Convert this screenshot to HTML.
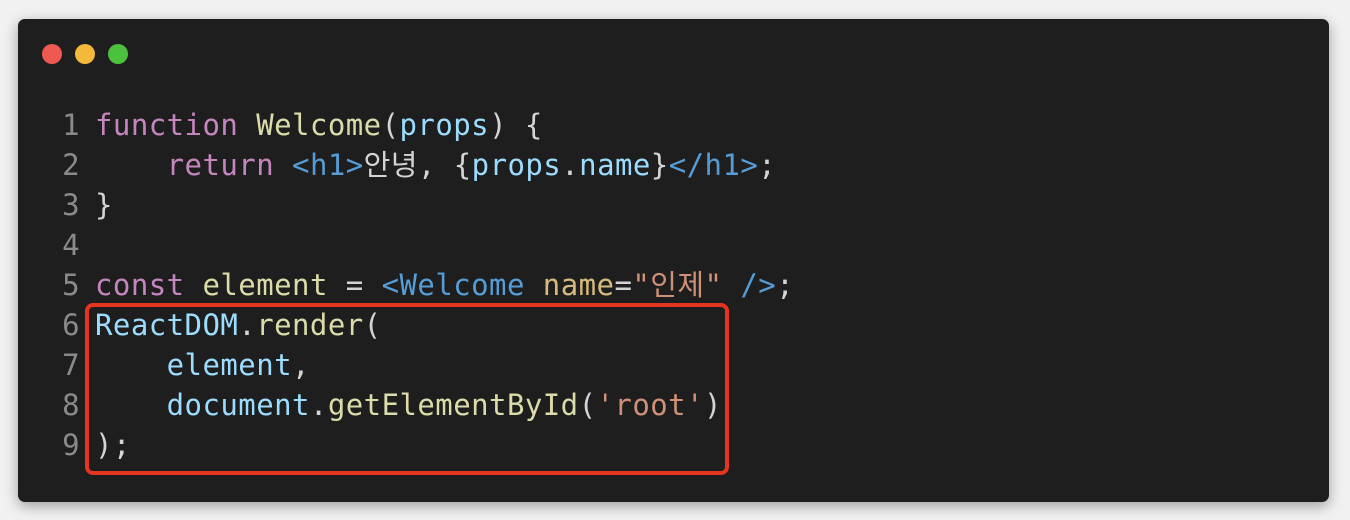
<!DOCTYPE html>
<html><head><meta charset="utf-8"><style>
body{margin:0;width:1350px;height:520px;background:#f1f1f1;position:relative;overflow:hidden}
.win{position:absolute;left:18px;top:19px;width:1311px;height:483px;background:#1e1e1e;border-radius:7px;box-shadow:0 4px 14px rgba(0,0,0,.35)}
.dot{position:absolute;top:44px;width:20px;height:20px;border-radius:50%}
.code{position:absolute;left:0;top:105px;font-family:"DejaVu Sans Mono","Noto Sans CJK KR",monospace;font-size:29px;line-height:40px;letter-spacing:0.45px;color:#d4d4d4;white-space:pre}
.ln{position:absolute;left:38px;width:42px;text-align:right;color:#8a8a8a}
.tx{position:absolute;left:95px}
.k{color:#c586c0}.f{color:#dcdcaa}.t{color:#569cd6}.v{color:#9cdcfe}.a{color:#ce9178}.at{color:#d7ba7d}
.box{position:absolute;left:85px;top:303px;width:636px;height:164px;border:4px solid #e5341f;border-radius:8px}
</style></head><body>
<div class="win"></div>
<div class="dot" style="left:42px;background:#ee5a52"></div>
<div class="dot" style="left:75px;background:#f4b83a"></div>
<div class="dot" style="left:108px;background:#4cc13e"></div>
<div class="code">
<div class="ln" style="top:0">1</div><div class="tx" style="top:0"><span class="k">function</span> <span class="f">Welcome</span>(<span class="v">props</span>) {</div>
<div class="ln" style="top:40px">2</div><div class="tx" style="top:40px">    <span class="k">return</span> <span class="t">&lt;h1&gt;</span>안녕, {<span class="v">props</span>.<span class="v">name</span>}<span class="t">&lt;/h1&gt;</span>;</div>
<div class="ln" style="top:80px">3</div><div class="tx" style="top:80px">}</div>
<div class="ln" style="top:120px">4</div>
<div class="ln" style="top:160px">5</div><div class="tx" style="top:160px"><span class="k">const</span> <span class="f">element</span> = <span class="t">&lt;Welcome</span> <span class="at">name</span>=<span class="a">"인제"</span> <span class="t">/&gt;</span>;</div>
<div class="ln" style="top:200px">6</div><div class="tx" style="top:200px"><span class="v">ReactDOM</span>.<span class="f">render</span>(</div>
<div class="ln" style="top:240px">7</div><div class="tx" style="top:240px">    <span class="v">element</span>,</div>
<div class="ln" style="top:280px">8</div><div class="tx" style="top:280px">    <span class="v">document</span>.<span class="f">getElementById</span>(<span class="a">'root'</span>)</div>
<div class="ln" style="top:320px">9</div><div class="tx" style="top:320px">);</div>
</div>
<div class="box"></div>
</body></html>
